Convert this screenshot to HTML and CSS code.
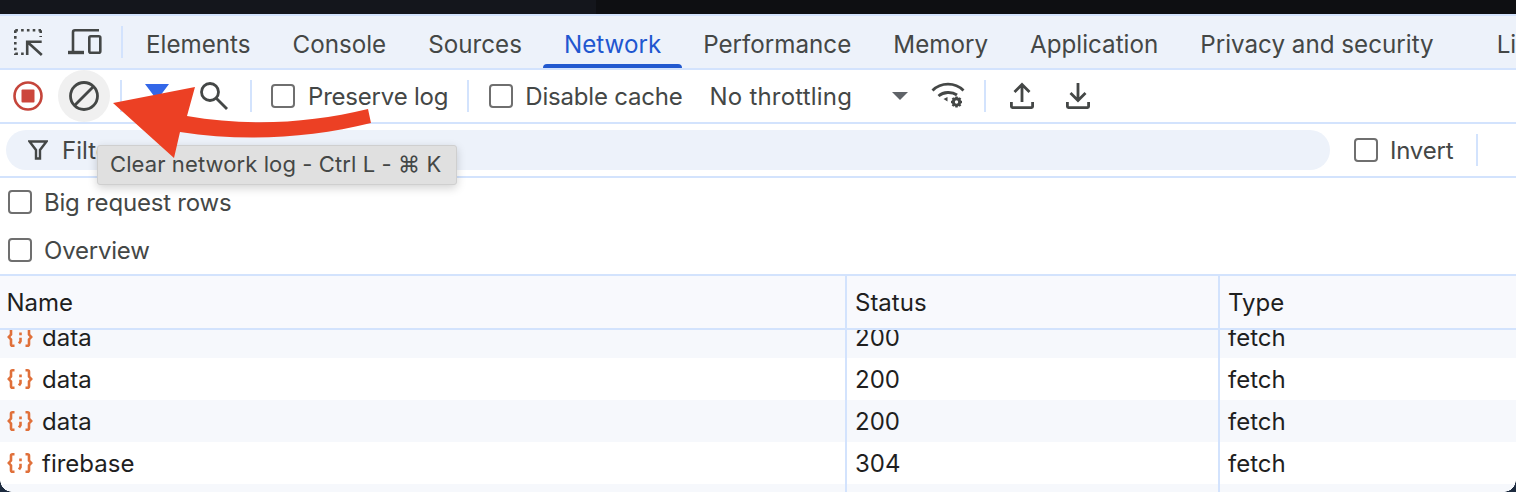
FILE: index.html
```html
<!DOCTYPE html>
<html lang="en">
<head>
<meta charset="utf-8">
<title>DevTools Network</title>
<link rel="stylesheet" href="styles.css">
</head>
<body>
<div class="topbar"><div class="topbar-left"></div></div>
<div class="devtools">
  <div class="tabbar">
    <svg class="ico-inspect" width="30" height="30" viewBox="0 0 30 30" fill="none" stroke="#444746" stroke-width="2.600">
      <path stroke-dasharray="2.600 3.200" d="M1.300 3.300H27M26.700 3.300V10M1.300 3.300V28M1.300 26.700H10"/>
      <path d="M27.700 14.700H13.200M13.200 13.400V28M13.200 14.700L27.800 28"/>
    </svg>
    <svg class="ico-device" width="34" height="26" viewBox="0 0 34 26" fill="none" stroke="#444746" stroke-width="2.600">
      <path d="M5 22V3.300Q5 1.300 7 1.300H31"/>
      <path d="M0 23.500H16" stroke-width="3.400"/>
      <rect x="21.300" y="7.300" width="11" height="16.400" rx="1.500"/>
    </svg>
    <span class="sep sep-tab"></span>
    <div class="tabs">
      <span class="tab">Elements</span>
      <span class="tab">Console</span>
      <span class="tab">Sources</span>
      <span class="tab active">Network</span>
      <span class="tab">Performance</span>
      <span class="tab">Memory</span>
      <span class="tab">Application</span>
      <span class="tab">Privacy and security</span>
      <span class="tab tab-last">Lighthouse</span>
    </div>
  </div>

  <div class="toolbar">
    <svg class="ico-record" width="30" height="30" viewBox="0 0 30 30">
      <circle cx="15" cy="15" r="13.500" fill="none" stroke="#c5453b" stroke-width="2.600"/>
      <rect x="8.500" y="8.500" width="13" height="13" rx="1" fill="#cc463c"/>
    </svg>
    <span class="round-btn">
      <svg width="30" height="30" viewBox="0 0 30 30" fill="none" stroke="#444746" stroke-width="2.800">
        <circle cx="15" cy="15" r="13.500"/>
        <path d="M24.500 5.500L5.500 24.500"/>
      </svg>
    </span>
    <span class="sep sep-a"></span>
    <svg class="ico-funnel" width="26" height="26" viewBox="0 0 26 26"><path d="M1 1h24L16 13v10l-6 0V13z" fill="#3367e8"/></svg>
    <svg class="ico-search" width="30" height="30" viewBox="0 0 30 30" fill="none" stroke="#444746" stroke-width="2.800">
      <circle cx="11" cy="11" r="8.500"/>
      <path d="M17 17L28 28"/>
    </svg>
    <span class="sep sep-b"></span>
    <label class="check check-preserve"><span class="box"></span><span>Preserve log</span></label>
    <span class="sep sep-c"></span>
    <label class="check check-disable"><span class="box"></span><span>Disable cache</span></label>
    <span class="throttle">No throttling</span>
    <span class="caret"></span>
    <svg class="ico-wifi" width="34" height="28" viewBox="0 0 34 28" fill="none" stroke="#444746" stroke-width="2.800">
      <path d="M1.500 8.500C10 0 24 0 32.500 8.500"/>
      <path d="M7.500 14C12.500 9.500 21 9.500 26 13"/>
      <path d="M12.500 17l4-2v4.500z" fill="#444746" stroke="none"/>
      <circle cx="25.500" cy="20" r="3.200" stroke-width="3"/>
      <path d="M25.500 14.500v2M25.500 23.500v2M20 20h2M29 20h2M21.500 16l1.500 1.500M28 22.500l1.500 1.500M29.500 16L28 17.500M23 22.500L21.500 24" stroke-width="2.400"/>
    </svg>
    <span class="sep sep-d"></span>
    <svg class="ico-transfer" width="24" height="28" viewBox="0 0 24 28" fill="none" stroke="#444746" stroke-width="2.800">
      <path d="M12 20V3M4.500 10L12 2.500 19.500 10"/>
      <path d="M1.400 20v4.600q0 1 1 1h19.200q1 0 1-1V20"/>
    </svg>
    <svg class="ico-transfer ico-down" width="24" height="28" viewBox="0 0 24 28" fill="none" stroke="#444746" stroke-width="2.800">
      <path d="M12 1v17M4.500 11L12 18.500 19.500 11"/>
      <path d="M1.400 20v4.600q0 1 1 1h19.200q1 0 1-1V20"/>
    </svg>
  </div>

  <div class="filterbar">
    <div class="filter-input">
      <svg width="20" height="20" viewBox="0 0 20 20" fill="none" stroke="#444746" stroke-width="2.400"><path d="M1.500 1.500h17L12 10v8.500H8V10z" stroke-linejoin="miter"/></svg>
      <span>Filter</span>
    </div>
    <label class="check check-invert"><span class="box"></span><span>Invert</span></label>
    <span class="sep sep-e"></span>
  </div>

  <div class="options">
    <label class="check option"><span class="box"></span><span>Big request rows</span></label>
    <label class="check option"><span class="box"></span><span>Overview</span></label>
  </div>

  <div class="table-head">
    <div class="cell cell-name">Name</div>
    <div class="cell">Status</div>
    <div class="cell">Type</div>
  </div>

  <div class="table-body">
    <div class="rows">
      <div class="row alt"><div class="cell cell-name"><svg class="ico-json"><use href="#json"/></svg>data</div><div class="cell">200</div><div class="cell">fetch</div></div>
      <div class="row"><div class="cell cell-name"><svg class="ico-json"><use href="#json"/></svg>data</div><div class="cell">200</div><div class="cell">fetch</div></div>
      <div class="row alt"><div class="cell cell-name"><svg class="ico-json"><use href="#json"/></svg>data</div><div class="cell">200</div><div class="cell">fetch</div></div>
      <div class="row"><div class="cell cell-name"><svg class="ico-json"><use href="#json"/></svg>firebase</div><div class="cell">304</div><div class="cell">fetch</div></div>
      <div class="row alt"><div class="cell cell-name"></div><div class="cell"></div><div class="cell"></div></div>
    </div>
  </div>
</div>

<span class="corner corner-l"></span>
<span class="corner corner-r"></span>

<div class="tooltip">Clear network log - Ctrl L - ⌘ K</div>

<svg class="arrow" width="270" height="80" viewBox="110 84 270 80">
  <path d="M113 103L195 87L187 116C250 127 310 123 368 109L371 123C310 138 245 142 180 132L174 158Z" fill="#ec4024"/>
</svg>

<svg class="defs" width="0" height="0">
  <symbol id="json" viewBox="0 0 26 20">
    <g fill="none" stroke="#e0703a" stroke-width="2.600">
      <path d="M7.500 1.300H5.500Q4 1.300 4 2.800V7.500L1.800 10 4 12.500V17.200Q4 18.700 5.500 18.700H7.500"/>
      <path d="M18.500 1.300H20.500Q22 1.300 22 2.800V7.500L24.200 10 22 12.500V17.200Q22 18.700 20.500 18.700H18.500"/>
      <path d="M13.500 5.500v2.800M13.500 10.800v3.400L12 16.500"/>
    </g>
  </symbol>
</svg>
</body>
</html>
```

FILE: styles.css
```css
* { box-sizing: border-box; }
html, body { margin: 0; padding: 0; }
body {
  width: 1516px;
  height: 492px;
  overflow: hidden;
  position: relative;
  font-family: Inter, "Liberation Sans", sans-serif;
  font-size: 24px;
  color: #444746;
  background: #fff;
}
svg { flex: none; display: block; }
.topbar { height: 14px; background: #0e0f12; }
.topbar-left { width: 596px; height: 14px; background: #14161c; }
.devtools { height: 478px; overflow: hidden; }

.tabbar {
  height: 56px;
  background: #edf2fa;
  border-top: 2px solid #d3e3fd;
  border-bottom: 2px solid #d3e3fd;
  display: flex;
  align-items: center;
  padding-left: 14px;
  white-space: nowrap;
  overflow: hidden;
}
.ico-device { margin-left: 24px; }
.sep { display: block; width: 2px; background: #d3e3fd; flex: none; height: 32px; }
.sep-tab { margin-left: 19px; }
.tabs { display: flex; height: 52px; margin-left: 2px; flex: none; }
.tab {
  display: flex;
  align-items: center;
  padding: 4px 21px 0;
  position: relative;
  flex: none;
  font-size: 24.2px;
}
.tab-last { margin-left: 21px; }
.tab.active { color: #1f57d0; }
.tab.active::after {
  content: "";
  position: absolute;
  left: 0;
  right: 0;
  bottom: 0;
  height: 4px;
  background: #2259cf;
  border-radius: 5px 5px 0 0;
}

.toolbar {
  height: 54px;
  border-bottom: 2px solid #d3e3fd;
  display: flex;
  align-items: center;
  padding-left: 13px;
  white-space: nowrap;
}
.round-btn {
  width: 52px;
  height: 52px;
  border-radius: 50%;
  background: #f0f0f0;
  display: flex;
  align-items: center;
  justify-content: center;
  margin-left: 15px;
  flex: none;
}
.sep-a { margin-left: 10px; }
.ico-funnel { margin-left: 22px; }
.ico-search { margin-left: 29px; }
.sep-b { margin-left: 21px; }
.check { display: flex; align-items: center; flex: none; letter-spacing: -.2px; }
.box {
  width: 24px;
  height: 24px;
  border: 2px solid #6f6f6f;
  border-radius: 4px;
  background: #fff;
  flex: none;
  margin-right: 13px;
}
.check-preserve { margin-left: 19px; }
.check-preserve .box { margin-right: 13px; }
.sep-c { margin-left: 19px; }
.check-disable { margin-left: 20px; }
.check-disable .box { margin-right: 12px; }
.throttle { margin-left: 27px; letter-spacing: .2px; }
.caret {
  width: 0;
  height: 0;
  border-left: 8px solid transparent;
  border-right: 8px solid transparent;
  border-top: 8px solid #5f6368;
  margin-left: 40px;
}
.ico-wifi { margin-left: 23px; }
.sep-d { margin-left: 19px; }
.ico-transfer { margin-left: 24px; }
.ico-down { margin-left: 32px; }

.filterbar {
  height: 54px;
  border-bottom: 2px solid #d3e3fd;
  display: flex;
  align-items: center;
  padding-left: 6px;
}
.filter-input {
  width: 1324px;
  height: 40px;
  border-radius: 20px;
  background: #edf2fa;
  display: flex;
  align-items: center;
  padding-left: 22px;
  gap: 14px;
  flex: none;
}
.check-invert { margin-left: 24px; }
.check-invert .box { margin-right: 12px; }
.sep-e { margin-left: 23px; }

.options { height: 98px; border-bottom: 2px solid #d3e3fd; }
.option { height: 48px; padding-left: 8px; }
.option .box { margin-right: 12px; }

.table-head, .row {
  display: grid;
  grid-template-columns: 845px 373px 1fr;
}
.table-head {
  height: 54px;
  background: #f8f9fd;
  border-bottom: 2px solid #d3e3fd;
  color: #1f1f1f;
}
.cell {
  display: flex;
  align-items: center;
  padding-left: 8px;
  border-left: 2px solid #d3e3fd;
}
.cell-name { padding-left: 6.500px; border-left: 0; }

.table-body { height: 162px; overflow: hidden; color: #1f1f1f; }
.rows { margin-top: -14px; }
.row { height: 42px; background: #fff; }
.row.alt { background: #f6f8fc; }
.ico-json { width: 26px; height: 20px; margin-right: 9.500px; flex: none; }

.corner {
  position: absolute;
  bottom: 0;
  width: 12px;
  height: 12px;
}
.corner-l { left: 0; background: radial-gradient(circle at 100% 0, transparent 11.500px, #1d2b3f 12px); }
.corner-r { right: 0; background: radial-gradient(circle at 0 0, transparent 11.500px, #1d2b3f 12px); }

.tooltip {
  position: absolute;
  left: 97px;
  top: 145px;
  width: 360px;
  height: 40px;
  padding: 0 0 2px 12px;
  display: flex;
  align-items: center;
  background: #e0e0e0;
  border: 1px solid #cfcfcf;
  border-radius: 3px;
  box-shadow: 0 3px 10px rgba(0, 0, 0, .18);
  white-space: nowrap;
  font-size: 22px;
  letter-spacing: .1px;
}
.arrow { position: absolute; left: 110px; top: 84px; }
.defs { position: absolute; }
```
